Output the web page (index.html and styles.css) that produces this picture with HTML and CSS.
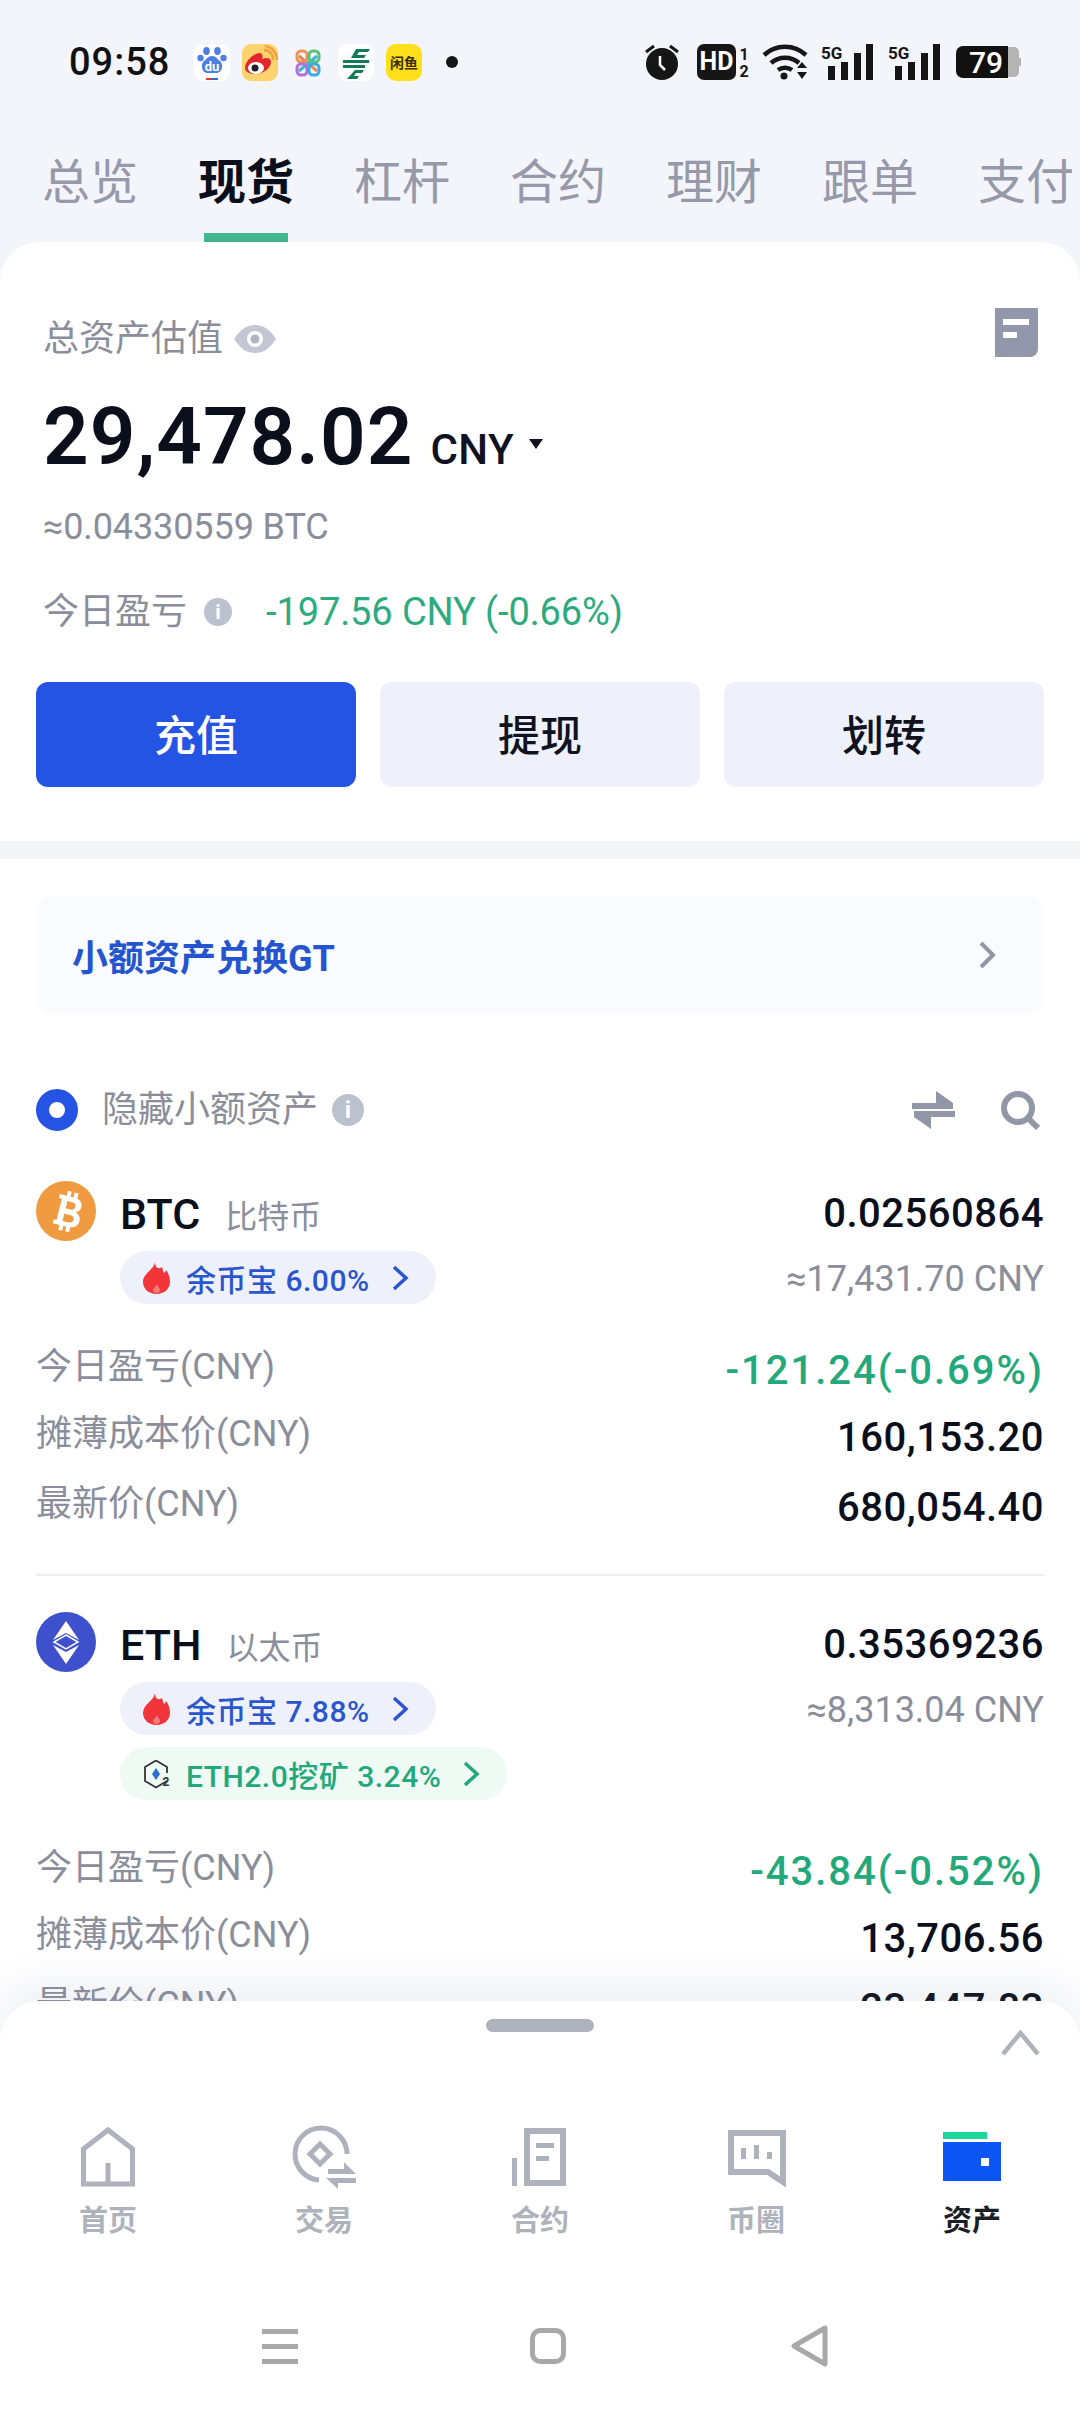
FILE: index.html
```html
<!DOCTYPE html>
<html lang="zh-CN">
<head>
    <meta charset="UTF-8">
    <meta name="viewport" content="width=device-width, initial-scale=1.0">
    <title>现货资产</title>
    <link rel="stylesheet" href="styles.css">
</head>
<body>
<div class="phone">
    <!-- status bar -->
    <div class="status-bar">
        <span class="time">09:58</span>
        <div class="notif-icons">
            <svg width="36" height="37" viewBox="0 0 36 37"><rect width="36" height="37" rx="9" fill="#fff"/><g fill="#4e7fe6"><ellipse cx="12.500" cy="7" rx="3.300" ry="4"/><ellipse cx="23.500" cy="7" rx="3.300" ry="4"/><circle cx="6.500" cy="14" r="3.200"/><circle cx="29.500" cy="14" r="3.200"/><path d="M18 12c4 0 5 3 8 5 4 3 2 12-3 12H13c-5 0-7-9-3-12 3-2 4-5 8-5z"/></g><text x="18" y="27" class="du">du</text><rect x="12" y="34" width="6" height="2" fill="#e33"/><rect x="18" y="34" width="6" height="2" fill="#36c"/></svg>
            <svg width="36" height="37" viewBox="0 0 36 37"><rect width="36" height="37" rx="9" fill="#fdd36f"/><path d="M3 24c0-7 8-14 14-15 4 0 4 3 3 6 5-2 9-1 9 3 0 6-8 12-15 12-6 0-11-2-11-6z" fill="#e6262d"/><ellipse cx="14" cy="24" rx="8" ry="6" fill="#fff"/><circle cx="13" cy="24" r="3.500" fill="#222"/><path d="M22 6a9 9 0 0 1 9 10M23 2a14 14 0 0 1 12 14" fill="none" stroke="#f3a13c" stroke-width="2.500"/></svg>
            <svg width="36" height="37" viewBox="0 0 36 37"><g fill="none" stroke-width="3"><path d="M9 12l18 15" stroke="#e8894c"/><path d="M27 12L9 27" stroke="#3fb6d8"/><rect x="7" y="7" width="10" height="11" rx="4" stroke="#f0925a"/><rect x="19" y="7" width="10" height="11" rx="4" stroke="#58c27a"/><rect x="7" y="20" width="10" height="11" rx="4" stroke="#b36fe0"/><rect x="19" y="20" width="10" height="11" rx="4" stroke="#3aa9e8"/></g></svg>
            <svg width="36" height="37" viewBox="0 0 36 37"><rect width="36" height="37" rx="9" fill="#fff"/><g fill="#127a55"><path d="M18 5h14l-2 3H21l-2 3h9l-2 3H13z"/><path d="M5 16h26v3H5z"/><path d="M5 21h22v3H5z"/><path d="M17 26h9l-2 3h-6l-2 3h5l-2 3H9z"/></g></svg>
            <svg width="36" height="37" viewBox="0 0 36 37"><rect width="36" height="37" rx="10" fill="#fde01a"/><text x="18" y="24" class="xianyu">闲鱼</text></svg>
        </div>
        <span class="notif-dot"></span>
        <div class="sys-icons">
            <svg class="alarm" width="36" height="36" viewBox="0 0 36 36"><circle cx="18" cy="20" r="16" fill="#161616"/><path d="M2 8l8-6M34 8l-8-6" stroke="#161616" stroke-width="3"/><path d="M16 12v9l5 5" fill="none" stroke="#fff" stroke-width="2.500"/></svg>
            <svg width="52" height="36" viewBox="0 0 52 36"><rect width="39" height="36" rx="7" fill="#161616"/><text x="19.500" y="26" class="hd">HD</text><text x="47" y="16" class="sim">1</text><text x="47" y="33" class="sim">2</text></svg>
            <svg width="46" height="36" viewBox="0 0 46 36"><g fill="none" stroke="#161616" stroke-width="4.500"><path d="M2 11c12-11 30-11 42 0"/><path d="M9 19c8-7 20-7 28 0"/><path d="M16 26c4-3 10-3 14 0"/></g><circle cx="22" cy="32" r="3.500" fill="#161616"/><path d="M35 24h10l-5-6zM35 28h10l-5 7z" fill="#161616"/></svg>
            <svg width="54" height="36" viewBox="0 0 54 36"><text x="0" y="15" class="five-g">5G</text><g fill="#161616"><rect x="7" y="22" width="7" height="14"/><rect x="20" y="18" width="7" height="18"/><rect x="33" y="9" width="7" height="27"/><rect x="45" y="0" width="7" height="36"/></g></svg>
            <svg width="54" height="36" viewBox="0 0 54 36"><text x="0" y="15" class="five-g">5G</text><g fill="#161616"><rect x="7" y="22" width="7" height="14"/><rect x="20" y="18" width="7" height="18"/><rect x="33" y="9" width="7" height="27"/><rect x="45" y="0" width="7" height="36"/></g></svg>
            <svg width="66" height="36" viewBox="0 0 66 36"><path d="M53 3h6a5 5 0 0 1 5 5v6h2v8h-2v6a5 5 0 0 1-5 5h-6z" fill="#b4b4b4"/><path d="M8 2h45v32H8a7 7 0 0 1-7-7V9a7 7 0 0 1 7-7z" fill="#111"/><text x="31" y="29" class="battery">79</text></svg>
        </div>
    </div>

    <!-- tabs -->
    <div class="tabs">
        <div class="tab">总览</div>
        <div class="tab tab-active">现货</div>
        <div class="tab">杠杆</div>
        <div class="tab">合约</div>
        <div class="tab">理财</div>
        <div class="tab">跟单</div>
        <div class="tab">支付</div>
    </div>

    <div class="card">
        <div class="summary">
            <div class="title-row">
                <span class="grey-text">总资产估值</span>
                <svg class="eye" width="44" height="30" viewBox="0 0 44 30"><path d="M1 15C8 4 15 1 22 1s14 3 21 14c-7 11-14 14-21 14S8 26 1 15z" fill="#c3c7d3"/><circle cx="22" cy="15" r="8" fill="#fff"/><circle cx="22" cy="15" r="4.500" fill="#b0b5c4"/></svg>
                <svg class="doc" width="43" height="49" viewBox="0 0 43 49"><path d="M0 0h43v41a8 8 0 0 1-8 8H0z" fill="#9297ab"/><rect x="8" y="11" width="26" height="6" fill="#fff"/><rect x="8" y="24" width="14" height="6" fill="#fff"/></svg>
            </div>
            <div class="amount-row">
                <span class="amount">29,478.02</span>
                <span class="amount-unit">CNY</span>
                <svg class="caret" width="14" height="10" viewBox="0 0 14 10"><path d="M0 0h14L7 10z" fill="#10131f"/></svg>
            </div>
            <div class="btc-approx">≈0.04330559 BTC</div>
            <div class="today-row">
                <span class="grey-text">今日盈亏</span>
                <span class="info info-small">i</span>
                <span class="today-value">-197.56 CNY (-0.66%)</span>
            </div>
        </div>

        <div class="actions">
            <div class="btn btn-primary">充值</div>
            <div class="btn">提现</div>
            <div class="btn">划转</div>
        </div>

        <div class="band"></div>

        <div class="banner">
            <span>小额资产兑换GT</span>
            <svg width="18" height="30" viewBox="0 0 18 30"><path d="M3 3l12 12L3 27" fill="none" stroke="#9297a8" stroke-width="4"/></svg>
        </div>

        <div class="filter-row">
            <span class="radio"></span>
            <span class="grey-text">隐藏小额资产</span>
            <span class="info">i</span>
            <svg class="swap" width="43" height="38" viewBox="0 0 43 38"><path d="M0 12h41v6H0zM24 0l17 12H24zM2 20h41v6H2zM19 38L2 26h17z" fill="#9297a8"/></svg>
            <svg class="search" width="39" height="39" viewBox="0 0 39 39"><circle cx="17" cy="17" r="14" fill="none" stroke="#9297a8" stroke-width="6"/><path d="M27 27l10 10" stroke="#9297a8" stroke-width="6"/></svg>
        </div>

        <!-- BTC -->
        <div class="asset">
            <div class="asset-head">
                <svg class="coin" width="60" height="60" viewBox="0 0 60 60"><circle cx="30" cy="30" r="30" fill="#f09a41"/><g transform="rotate(14 30 30)" fill="#fff"><path fill-rule="evenodd" d="M20 15h15c6 0 9 3 9 7.500 0 3.500-2 5.500-4.500 6.500 3.500 1 6 3.500 6 7.500 0 5.500-4 8.500-10 8.500H20v-4h3V19h-3zM29 20v7.500h5c3 0 4-1.700 4-3.800S37 20 34 20zM29 33v7.500h6c3 0 4.500-1.700 4.500-3.800S38 33 35 33z"/><rect x="27" y="10" width="4" height="6"/><rect x="34" y="10" width="4" height="6"/><rect x="27" y="44" width="4" height="6"/><rect x="34" y="44" width="4" height="6"/></g></svg>
                <div class="asset-info">
                    <div class="asset-name"><b>BTC</b><span>比特币</span></div>
                    <div class="pill">
                        <svg width="27" height="32" viewBox="0 0 27 32"><path d="M12 0c0 5 3 8 7 5 1 3 1 5 2 6 1-1 2-2 2-3 3 4 4 8 4 12 0 7-6 12-13.500 12S0 27 0 20C0 11 11 8 12 0z" fill="#f2353a"/><path d="M14 22c0 2 3 4 3 6 0 2-2 3-3.500 3S10 30 10 28c0-2 3-3 4-6z" fill="#f77a7a"/></svg>
                        <span>余币宝 6.00%</span>
                        <svg class="pill-chevron" width="17" height="26" viewBox="0 0 17 26"><path d="M2 2l12 11L2 24" fill="none" stroke="#2a55cf" stroke-width="3.500"/></svg>
                    </div>
                </div>
                <div class="asset-values">
                    <div class="num">0.02560864</div>
                    <div class="approx">≈17,431.70 CNY</div>
                </div>
            </div>
            <div class="rows">
                <div class="row"><span class="grey-text">今日盈亏(CNY)</span><span class="num num-green">-121.24(-0.69%)</span></div>
                <div class="row"><span class="grey-text">摊薄成本价(CNY)</span><span class="num">160,153.20</span></div>
                <div class="row"><span class="grey-text">最新价(CNY)</span><span class="num">680,054.40</span></div>
            </div>
        </div>

        <div class="divider"></div>

        <!-- ETH -->
        <div class="asset">
            <div class="asset-head">
                <svg class="coin" width="60" height="60" viewBox="0 0 60 60"><circle cx="30" cy="30" r="30" fill="#3f50cd"/><path d="M30 9L43 28 30 21 17 28zM17 33l13 7 13-7-13 19z" fill="#fff"/><path d="M30 23l12 7-12 7-12-7z" fill="#3f50cd" stroke="#fff" stroke-width="1.500"/></svg>
                <div class="asset-info">
                    <div class="asset-name"><b>ETH</b><span>以太币</span></div>
                    <div class="pill">
                        <svg width="27" height="32" viewBox="0 0 27 32"><path d="M12 0c0 5 3 8 7 5 1 3 1 5 2 6 1-1 2-2 2-3 3 4 4 8 4 12 0 7-6 12-13.500 12S0 27 0 20C0 11 11 8 12 0z" fill="#f2353a"/><path d="M14 22c0 2 3 4 3 6 0 2-2 3-3.500 3S10 30 10 28c0-2 3-3 4-6z" fill="#f77a7a"/></svg>
                        <span>余币宝 7.88%</span>
                        <svg class="pill-chevron" width="17" height="26" viewBox="0 0 17 26"><path d="M2 2l12 11L2 24" fill="none" stroke="#2a55cf" stroke-width="3.500"/></svg>
                    </div>
                    <div class="pill pill-green">
                        <svg width="27" height="30" viewBox="0 0 27 30"><path d="M13 1.500L24 8v6M24 22l-11 6.500L2 22V8l11-6.500" fill="none" stroke="#333" stroke-width="1.800"/><path d="M13 9l4 6-4 6-4-6z" fill="#2a6fd6"/><text x="23" y="27" class="hex-two">2</text></svg>
                        <span>ETH2.0挖矿 3.24%</span>
                        <svg class="pill-chevron" width="17" height="26" viewBox="0 0 17 26"><path d="M2 2l12 11L2 24" fill="none" stroke="#22a87a" stroke-width="3.500"/></svg>
                    </div>
                </div>
                <div class="asset-values">
                    <div class="num">0.35369236</div>
                    <div class="approx">≈8,313.04 CNY</div>
                </div>
            </div>
            <div class="rows rows-eth">
                <div class="row"><span class="grey-text">今日盈亏(CNY)</span><span class="num num-green">-43.84(-0.52%)</span></div>
                <div class="row"><span class="grey-text">摊薄成本价(CNY)</span><span class="num">13,706.56</span></div>
                <div class="row"><span class="grey-text">最新价(CNY)</span><span class="num">23,447.83</span></div>
            </div>
        </div>
    </div>

    <!-- bottom sheet -->
    <div class="sheet">
        <div class="handle"></div>
        <svg class="sheet-up" width="39" height="26" viewBox="0 0 39 26"><path d="M2 24L19.500 3 37 24" fill="none" stroke="#aeb2bc" stroke-width="4.500"/></svg>
        <div class="nav">
            <div class="nav-item">
                <svg width="64" height="64" viewBox="0 0 64 64"><path d="M7.500 59V24L32 5l24.500 19v35zM32 38v21" fill="none" stroke="#aeb2bc" stroke-width="5"/></svg>
                <span>首页</span>
            </div>
            <div class="nav-item">
                <svg width="64" height="64" viewBox="0 0 64 64"><path d="M55 29A26 26 0 1 0 27 55" fill="none" stroke="#aeb2bc" stroke-width="5"/><path d="M28 19l10 10-10 10-10-10z" fill="none" stroke="#aeb2bc" stroke-width="5"/><path d="M52 37l12 12H36v-5h16zM34 53h30v5H46v6z" fill="#aeb2bc"/></svg>
                <span>交易</span>
            </div>
            <div class="nav-item">
                <svg width="64" height="64" viewBox="0 0 64 64"><rect x="19" y="6" width="36" height="52" fill="none" stroke="#aeb2bc" stroke-width="6"/><path d="M4 33h5v28H4zM28 18h18v5H28zM28 31h13v5H28z" fill="#aeb2bc"/></svg>
                <span>合约</span>
            </div>
            <div class="nav-item">
                <svg width="64" height="64" viewBox="0 0 64 64"><path d="M7 8h52v49L44 47H7z" fill="none" stroke="#aeb2bc" stroke-width="6"/><path d="M17 23h5v11h-5zM30 20h5v14h-5zM43 27h5v7h-5z" fill="#aeb2bc"/></svg>
                <span>币圈</span>
            </div>
            <div class="nav-item nav-item-active">
                <svg width="64" height="64" viewBox="0 0 64 64"><rect x="3" y="7" width="44" height="7" fill="#1ed79c"/><rect x="3" y="17" width="58" height="39" fill="#0b56f5"/><rect x="41" y="33" width="8" height="8" fill="#fff"/></svg>
                <span>资产</span>
            </div>
        </div>
        <div class="sys-nav">
            <svg width="36" height="36" viewBox="0 0 36 36"><path d="M0 1h36v5H0zM0 16h36v5H0zM0 31h36v5H0z" fill="#a8a8a8"/></svg>
            <svg width="36" height="36" viewBox="0 0 36 36"><rect x="2.500" y="2.500" width="31" height="31" rx="8" fill="none" stroke="#a8a8a8" stroke-width="5"/></svg>
            <svg class="sys-back" width="37" height="42" viewBox="0 0 37 42"><path d="M34 3L3 21l31 18z" fill="none" stroke="#a8a8a8" stroke-width="5" stroke-linejoin="round"/></svg>
        </div>
    </div>
</div>
</body>
</html>
```

FILE: styles.css
```css
body {
    margin: 0;
    font-family: Roboto, "Noto Sans CJK SC", sans-serif;
    background: #f3f5fa;
}

.phone {
    position: relative;
    width: 1080px;
    height: 2412px;
    overflow: hidden;
    background: #f3f5fa;
    display: flex;
    flex-direction: column;
}

/* status bar */
.status-bar {
    height: 124px;
    flex-shrink: 0;
    display: flex;
    align-items: center;
    padding: 0 59px 0 69px;
}
.time {
    font-size: 38px;
    font-weight: 500;
    letter-spacing: 1px;
    color: #111;
    width: 99px;
}
.notif-icons {
    display: flex;
    gap: 12px;
    margin-left: 26px;
}
.notif-dot {
    width: 12px;
    height: 12px;
    border-radius: 50%;
    background: #161616;
    margin-left: 24px;
}
.sys-icons {
    margin-left: auto;
    display: flex;
    align-items: center;
    gap: 13px;
}
.sys-icons svg {
    overflow: visible;
}
.alarm {
    margin-right: 4px;
}
.du {
    font: 700 13px Roboto, sans-serif;
    fill: #fff;
    text-anchor: middle;
}
.xianyu {
    font: 700 14px "Noto Sans CJK SC", sans-serif;
    fill: #3a2c00;
    text-anchor: middle;
}
.hd {
    font: 700 25px Roboto, sans-serif;
    fill: #fff;
    text-anchor: middle;
}
.sim {
    font: 700 16px Roboto, sans-serif;
    fill: #161616;
    text-anchor: middle;
}
.five-g {
    font: 700 17px Roboto, sans-serif;
    fill: #161616;
}
.battery {
    font: 500 30px Roboto, sans-serif;
    fill: #fff;
    text-anchor: middle;
}

/* tabs */
.tabs {
    height: 118px;
    flex-shrink: 0;
    display: flex;
    gap: 60px;
    padding-left: 42px;
    overflow: hidden;
}
.tab {
    flex-shrink: 0;
    width: 96px;
    padding-top: 29px;
    font-size: 48px;
    line-height: 60px;
    color: #9599aa;
    white-space: nowrap;
}
.tab-active {
    color: #0b0f1c;
    font-weight: 700;
}
.tab-active::after {
    content: "";
    display: block;
    width: 84px;
    height: 9px;
    margin: 20px auto 0;
    background: #42b78e;
}

/* main card */
.card {
    flex: 1;
    background: #fff;
    border-radius: 40px 40px 0 0;
    overflow: hidden;
}
.grey-text {
    font-size: 36px;
    line-height: 50px;
    color: #8a8e9c;
}
.summary {
    padding: 72px 42px 0 43px;
}
.title-row {
    display: flex;
    align-items: center;
    height: 50px;
}
.eye {
    margin-left: 10px;
}
.doc {
    margin-left: auto;
    align-self: flex-start;
    margin-top: -6px;
}
.amount-row {
    display: flex;
    align-items: baseline;
    margin-top: 28px;
    line-height: 90px;
}
.amount {
    font-size: 80px;
    font-weight: 600;
    letter-spacing: 1px;
    color: #0b0f1c;
}
.amount-unit {
    font-size: 42px;
    font-weight: 500;
    letter-spacing: 0.500px;
    color: #10131f;
    margin-left: 17px;
}
.caret {
    margin-left: 15px;
    align-self: center;
}
.btc-approx {
    margin-top: 10px;
    font-size: 36px;
    letter-spacing: -0.100px;
    line-height: 44px;
    color: #8a8e9c;
}
.today-row {
    display: flex;
    align-items: center;
    margin-top: 38px;
    height: 50px;
}
.today-value {
    margin-left: 34px;
    font-size: 38px;
    letter-spacing: -0.100px;
    color: #2bab7f;
}
.info {
    width: 32px;
    height: 32px;
    border-radius: 50%;
    background: #bcc1cf;
    color: #fff;
    font-size: 24px;
    font-weight: 700;
    line-height: 32px;
    text-align: center;
    margin-left: 14px;
}
.info-small {
    width: 28px;
    height: 28px;
    line-height: 28px;
    font-size: 21px;
    margin-left: 17px;
}

.actions {
    display: flex;
    gap: 24px;
    padding: 0 36px;
    margin-top: 45px;
}
.btn {
    flex: 1;
    height: 105px;
    border-radius: 12px;
    background: #eef1f9;
    color: #10131f;
    font-size: 42px;
    font-weight: 500;
    line-height: 109px;
    text-align: center;
}
.btn-primary {
    background: #2554e4;
    color: #fff;
}

.band {
    height: 18px;
    margin-top: 54px;
    background: #f3f5f9;
}

.banner {
    display: flex;
    align-items: center;
    justify-content: space-between;
    height: 117px;
    margin: 37px 36px 0;
    padding: 0 48px 0 36px;
    border-radius: 18px;
    background: #fafbfe;
    color: #2554d0;
    font-size: 36px;
    font-weight: 700;
}

.filter-row {
    display: flex;
    align-items: center;
    height: 44px;
    margin-top: 75px;
    padding: 0 40px 0 36px;
}
.radio {
    box-sizing: border-box;
    width: 42px;
    height: 42px;
    border: 13px solid #2554e4;
    border-radius: 50%;
    margin-right: 24px;
}
.swap {
    margin-left: auto;
}
.search {
    margin-left: 46px;
}

/* asset blocks */
.asset {
    padding: 0 36px;
}
.filter-row + .asset {
    margin-top: 49px;
}
.asset-head {
    display: flex;
    align-items: flex-start;
}
.coin {
    flex-shrink: 0;
}
.asset-info {
    margin-left: 24px;
}
.asset-name {
    box-sizing: border-box;
    display: flex;
    align-items: center;
    height: 60px;
    padding-top: 6px;
}
.asset-name b {
    font-size: 43px;
    font-weight: 500;
    color: #0b0f1c;
}
.asset-name span {
    margin-left: 25px;
    font-size: 32px;
    color: #8a8e9c;
}
.pill {
    display: flex;
    align-items: center;
    width: fit-content;
    height: 53px;
    margin-top: 10px;
    padding: 0 27px 0 23px;
    border-radius: 27px;
    background: #eef1f9;
    color: #2a55cf;
    font-size: 30px;
    font-weight: 500;
}
.pill + .pill {
    margin-top: 12px;
}
.pill span {
    margin-left: 16px;
    letter-spacing: 0.500px;
}
.pill-chevron {
    margin-left: 22px;
}
.pill-green {
    background: #effaf5;
    color: #22a87a;
}
.hex-two {
    font: 700 12px Roboto, sans-serif;
    fill: #333;
    text-anchor: middle;
}
.asset-values {
    margin-left: auto;
    padding-top: 3px;
    text-align: right;
}
.num {
    font-size: 40px;
    font-weight: 500;
    letter-spacing: 0.500px;
    line-height: 60px;
    color: #0b0f1c;
}
.num-green {
    color: #22a87a;
    letter-spacing: 2px;
}
.approx {
    margin-top: 13px;
    font-size: 36px;
    line-height: 44px;
    color: #8a8e9c;
}
.rows {
    margin-top: 33px;
}
.rows-eth {
    margin-top: 38px;
}
.row {
    display: flex;
    justify-content: space-between;
    align-items: flex-start;
    height: 67px;
}
.row:nth-child(3) {
    margin-top: 3px;
}
.row .grey-text {
    line-height: 60px;
}
.row .num {
    margin-top: 4px;
}
.divider {
    height: 2px;
    margin: 33px 36px 36px;
    background: #eceef2;
}

/* bottom sheet over the list */
.sheet {
    position: absolute;
    left: 0;
    right: 0;
    top: 2001px;
    bottom: 0;
    background: #fff;
    border-radius: 40px 40px 0 0;
    box-shadow: 0 -18px 40px rgba(120, 135, 170, 0.12);
}
.handle {
    width: 108px;
    height: 13px;
    margin: 18px auto 0;
    border-radius: 7px;
    background: #aeb2bd;
}
.sheet-up {
    position: absolute;
    top: 29px;
    right: 40px;
}
.nav {
    display: grid;
    grid-template-columns: repeat(5, 1fr);
    margin-top: 93px;
}
.nav-item {
    display: flex;
    flex-direction: column;
    align-items: center;
    gap: 12px;
    font-size: 29px;
    font-weight: 700;
    line-height: 40px;
    color: #aeb2bc;
}
.nav-item-active {
    color: #1b1e26;
}
.sys-nav {
    display: flex;
    align-items: center;
    height: 60px;
    margin-top: 75px;
    padding-left: 262px;
    gap: 232px;
}
.sys-back {
    margin-left: -7px;
}
```
